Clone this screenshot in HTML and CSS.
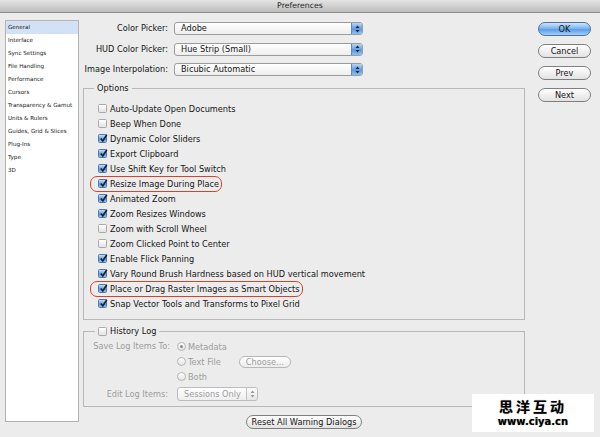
FILE: index.html
```html
<!DOCTYPE html>
<html>
<head>
    <link rel="stylesheet" href="styles.css">
    <title>Preferences</title>
</head>
<body>
    <div class="titlebar">Preferences</div>
    <div class="window">
        <ul class="sidebar">
            <li class="selected">General</li>
            <li>Interface</li>
            <li>Sync Settings</li>
            <li>File Handling</li>
            <li>Performance</li>
            <li>Cursors</li>
            <li>Transparency &amp; Gamut</li>
            <li>Units &amp; Rulers</li>
            <li>Guides, Grid &amp; Slices</li>
            <li>Plug-Ins</li>
            <li>Type</li>
            <li>3D</li>
        </ul>

        <div class="content">
            <div class="popups">
                <label>Color Picker:</label>
                <div class="popup">Adobe<span class="stepper"><svg width="5" height="8" viewBox="0 0 5 8"><path d="M2.5 0.5 L4.5 3 L0.5 3 Z M2.5 7.5 L4.5 5 L0.5 5 Z" fill="#1d2635"/></svg></span></div>
                <label>HUD Color Picker:</label>
                <div class="popup">Hue Strip (Small)<span class="stepper"><svg width="5" height="8" viewBox="0 0 5 8"><path d="M2.5 0.5 L4.5 3 L0.5 3 Z M2.5 7.5 L4.5 5 L0.5 5 Z" fill="#1d2635"/></svg></span></div>
                <label>Image Interpolation:</label>
                <div class="popup">Bicubic Automatic<span class="stepper"><svg width="5" height="8" viewBox="0 0 5 8"><path d="M2.5 0.5 L4.5 3 L0.5 3 Z M2.5 7.5 L4.5 5 L0.5 5 Z" fill="#1d2635"/></svg></span></div>
            </div>

            <fieldset class="group options">
                <legend>Options</legend>
                <div class="check"><span class="box"></span>Auto-Update Open Documents</div>
                <div class="check"><span class="box"></span>Beep When Done</div>
                <div class="check"><span class="box on"><svg width="9" height="9" viewBox="0 0 9 9"><path d="M1.8 4.6 L3.8 7 L7.8 0.8" fill="none" stroke="#18202e" stroke-width="1.6"/></svg></span>Dynamic Color Sliders</div>
                <div class="check"><span class="box on"><svg width="9" height="9" viewBox="0 0 9 9"><path d="M1.8 4.6 L3.8 7 L7.8 0.8" fill="none" stroke="#18202e" stroke-width="1.6"/></svg></span>Export Clipboard</div>
                <div class="check"><span class="box on"><svg width="9" height="9" viewBox="0 0 9 9"><path d="M1.8 4.6 L3.8 7 L7.8 0.8" fill="none" stroke="#18202e" stroke-width="1.6"/></svg></span>Use Shift Key for Tool Switch</div>
                <div class="check marked"><span class="box on"><svg width="9" height="9" viewBox="0 0 9 9"><path d="M1.8 4.6 L3.8 7 L7.8 0.8" fill="none" stroke="#18202e" stroke-width="1.6"/></svg></span>Resize Image During Place</div>
                <div class="check"><span class="box on"><svg width="9" height="9" viewBox="0 0 9 9"><path d="M1.8 4.6 L3.8 7 L7.8 0.8" fill="none" stroke="#18202e" stroke-width="1.6"/></svg></span>Animated Zoom</div>
                <div class="check"><span class="box on"><svg width="9" height="9" viewBox="0 0 9 9"><path d="M1.8 4.6 L3.8 7 L7.8 0.8" fill="none" stroke="#18202e" stroke-width="1.6"/></svg></span>Zoom Resizes Windows</div>
                <div class="check"><span class="box"></span>Zoom with Scroll Wheel</div>
                <div class="check"><span class="box"></span>Zoom Clicked Point to Center</div>
                <div class="check"><span class="box on"><svg width="9" height="9" viewBox="0 0 9 9"><path d="M1.8 4.6 L3.8 7 L7.8 0.8" fill="none" stroke="#18202e" stroke-width="1.6"/></svg></span>Enable Flick Panning</div>
                <div class="check"><span class="box on"><svg width="9" height="9" viewBox="0 0 9 9"><path d="M1.8 4.6 L3.8 7 L7.8 0.8" fill="none" stroke="#18202e" stroke-width="1.6"/></svg></span>Vary Round Brush Hardness based on HUD vertical movement</div>
                <div class="check marked"><span class="box on"><svg width="9" height="9" viewBox="0 0 9 9"><path d="M1.8 4.6 L3.8 7 L7.8 0.8" fill="none" stroke="#18202e" stroke-width="1.6"/></svg></span>Place or Drag Raster Images as Smart Objects</div>
                <div class="check"><span class="box on"><svg width="9" height="9" viewBox="0 0 9 9"><path d="M1.8 4.6 L3.8 7 L7.8 0.8" fill="none" stroke="#18202e" stroke-width="1.6"/></svg></span>Snap Vector Tools and Transforms to Pixel Grid</div>
            </fieldset>

            <fieldset class="group history">
                <legend><span class="box"></span>History Log</legend>
                <div class="logGrid">
                    <label>Save Log Items To:</label>
                    <div class="radio"><span class="dot on"></span>Metadata</div>
                    <span></span>
                    <div class="radio"><span class="dot"></span>Text File<button class="choose">Choose...</button></div>
                    <span></span>
                    <div class="radio"><span class="dot"></span>Both</div>
                    <label class="editLabel">Edit Log Items:</label>
                    <div class="popup small">Sessions Only<span class="stepper gray"><svg width="5" height="8" viewBox="0 0 5 8"><path d="M2.5 0.5 L4.5 3 L0.5 3 Z M2.5 7.5 L4.5 5 L0.5 5 Z" fill="#9a9a9a"/></svg></span></div>
                </div>
            </fieldset>

            <button class="reset">Reset All Warning Dialogs</button>
        </div>

        <div class="buttons">
            <button class="btn ok">OK</button>
            <button class="btn">Cancel</button>
            <button class="btn">Prev</button>
            <button class="btn">Next</button>
        </div>
    </div>

    <div class="watermark">
        <div class="wmTitle">思洋互动</div>
        <div class="wmUrl">www.ciya.cn</div>
    </div>
</body>
</html>
```

FILE: styles.css
```css
*{
    margin: 0px;
    padding: 0px;
    box-sizing: border-box;
}
body{
    width: 600px;
    height: 437px;
    overflow: hidden;
    position: relative;
    background-color: #ececec;
    font-family: "DejaVu Sans", sans-serif;
    font-size: 8.2px;
    color: #151515;
}
.titlebar{
    height: 13px;
    line-height: 12px;
    text-align: center;
    font-size: 7.8px;
    color: #262626;
    background: linear-gradient(#e4e4e4, #bdbdbd);
    border-bottom: 1px solid #8c8c8c;
}
.window{
    display: flex;
    align-items: flex-start;
}

/* left list */
.sidebar{
    list-style: none;
    margin: 7px 0 0 5px;
    width: 74px;
    height: 402px;
    background-color: #fff;
    border: 1px solid #b3b3b3;
    font-size: 5.6px;
}
.sidebar li{
    height: 13px;
    line-height: 13px;
    padding-left: 2px;
}
.sidebar .selected{
    background-color: #d2e1f5;
}

/* middle column */
.content{
    margin-left: 4px;
    width: 442px;
    padding-top: 9px;
}
.popups{
    display: grid;
    grid-template-columns: 85px 189px;
    column-gap: 6px;
    row-gap: 7.5px;
}
.popups label{
    text-align: right;
    line-height: 13px;
}
.popup{
    display: flex;
    justify-content: space-between;
    height: 13px;
    line-height: 11px;
    padding-left: 6px;
    border: 1px solid #9c9c9c;
    border-radius: 3px;
    background: linear-gradient(#ffffff, #eeeeee);
    overflow: hidden;
}
.stepper{
    display: flex;
    align-items: center;
    justify-content: center;
    width: 11px;
    height: 11px;
    background: linear-gradient(#b5d5f6, #5b9be2 55%, #8fc0f2);
    border-left: 1px solid #6288b8;
}
.stepper.gray{
    background: linear-gradient(#fbfbfb, #e6e6e6);
    border-left: 1px solid #c2c2c2;
}

.group{
    border: 1px solid #b8b8b8;
    min-inline-size: 0;
}
.group legend{
    line-height: 11px;
    padding: 0 3px;
}
.options{
    margin-top: 7px;
    padding: 7px 14px 8px 14px;
}
.options legend{
    margin-left: -4px;
}
.check{
    display: flex;
    align-items: center;
    gap: 3px;
    height: 15px;
    white-space: nowrap;
}
.check.marked{
    position: relative;
    width: fit-content;
}
.check.marked::after{
    content: "";
    position: absolute;
    left: -8px;
    right: -3px;
    top: 0px;
    height: 14px;
    border: 1.5px solid #d6432b;
    border-radius: 7px;
}
.box{
    display: inline-block;
    width: 9px;
    height: 9px;
    flex: none;
    border: 1px solid #a8a8a8;
    border-radius: 1.5px;
    background: linear-gradient(#ffffff, #e2e2e2);
}
.box.on{
    border-color: #4f79ad;
    background: linear-gradient(#c3dcf7, #5e9de2 60%, #8dbff2);
}
.box svg{
    display: block;
    margin: -1px 0 0 0;
}

.history{
    margin-top: 6px;
    padding: 2px 0 5px 0;
}
.history legend{
    display: flex;
    align-items: center;
    gap: 3px;
    margin-left: 11px;
}
.logGrid{
    display: grid;
    grid-template-columns: 86px 1fr;
    column-gap: 7px;
    color: #9c9c9c;
}
.logGrid label{
    text-align: right;
    line-height: 15px;
}
.logGrid .editLabel{
    margin-top: 3px;
    line-height: 14px;
    padding-right: 2px;
}
.radio{
    display: flex;
    align-items: center;
    gap: 2px;
    height: 15px;
}
.dot{
    position: relative;
    width: 9px;
    height: 9px;
    border: 1px solid #b4b4b4;
    border-radius: 50%;
    background: linear-gradient(#ffffff, #e4e4e4);
}
.dot.on::after{
    content: "";
    position: absolute;
    left: 2px;
    top: 2px;
    width: 3px;
    height: 3px;
    border-radius: 50%;
    background-color: #8a8a8a;
}
.choose{
    margin-left: 16px;
    height: 12px;
    padding: 0 6px;
    font: inherit;
    line-height: 10px;
    color: #9c9c9c;
    border: 1px solid #b7b7b7;
    border-radius: 6px;
    background: linear-gradient(#ffffff, #ececec);
}
.popup.small{
    margin-top: 3px;
    width: 81px;
    height: 14px;
    line-height: 12px;
    border-color: #bcbcbc;
}
.popup.small .stepper{
    height: 12px;
}
.reset{
    display: block;
    margin: 8px auto 0 auto;
    width: 116px;
    height: 14px;
    font: inherit;
    line-height: 12px;
    color: #151515;
    border: 1px solid #7f7f7f;
    border-radius: 7px;
    background: linear-gradient(#ffffff, #e2e2e2);
}

/* right column */
.buttons{
    display: flex;
    flex-direction: column;
    gap: 8px;
    margin-left: 13px;
    padding-top: 9px;
}
.btn{
    width: 53px;
    height: 14px;
    font: inherit;
    line-height: 12px;
    color: #151515;
    border: 1px solid #7f7f7f;
    border-radius: 7px;
    background: linear-gradient(#ffffff, #e2e2e2);
}
.btn.ok{
    border-color: #4b72a6;
    background: linear-gradient(#cfe4fb, #74b0f0 50%, #5c9ee8 55%, #a4cdf6);
}

.watermark{
    position: absolute;
    left: 472px;
    top: 394px;
    width: 122px;
    height: 38px;
    background-color: #fff;
    text-align: center;
    color: #000;
    font-weight: bold;
}
.wmTitle{
    margin-top: 5px;
    font-family: "Noto Sans CJK SC", sans-serif;
    font-size: 14px;
    line-height: 14px;
    letter-spacing: 3px;
    text-shadow: 0 0 1px #777;
}
.wmUrl{
    margin-top: 3px;
    font-family: "DejaVu Sans", sans-serif;
    font-size: 10px;
    line-height: 11px;
    text-shadow: 0 0 1px #777;
}
```
